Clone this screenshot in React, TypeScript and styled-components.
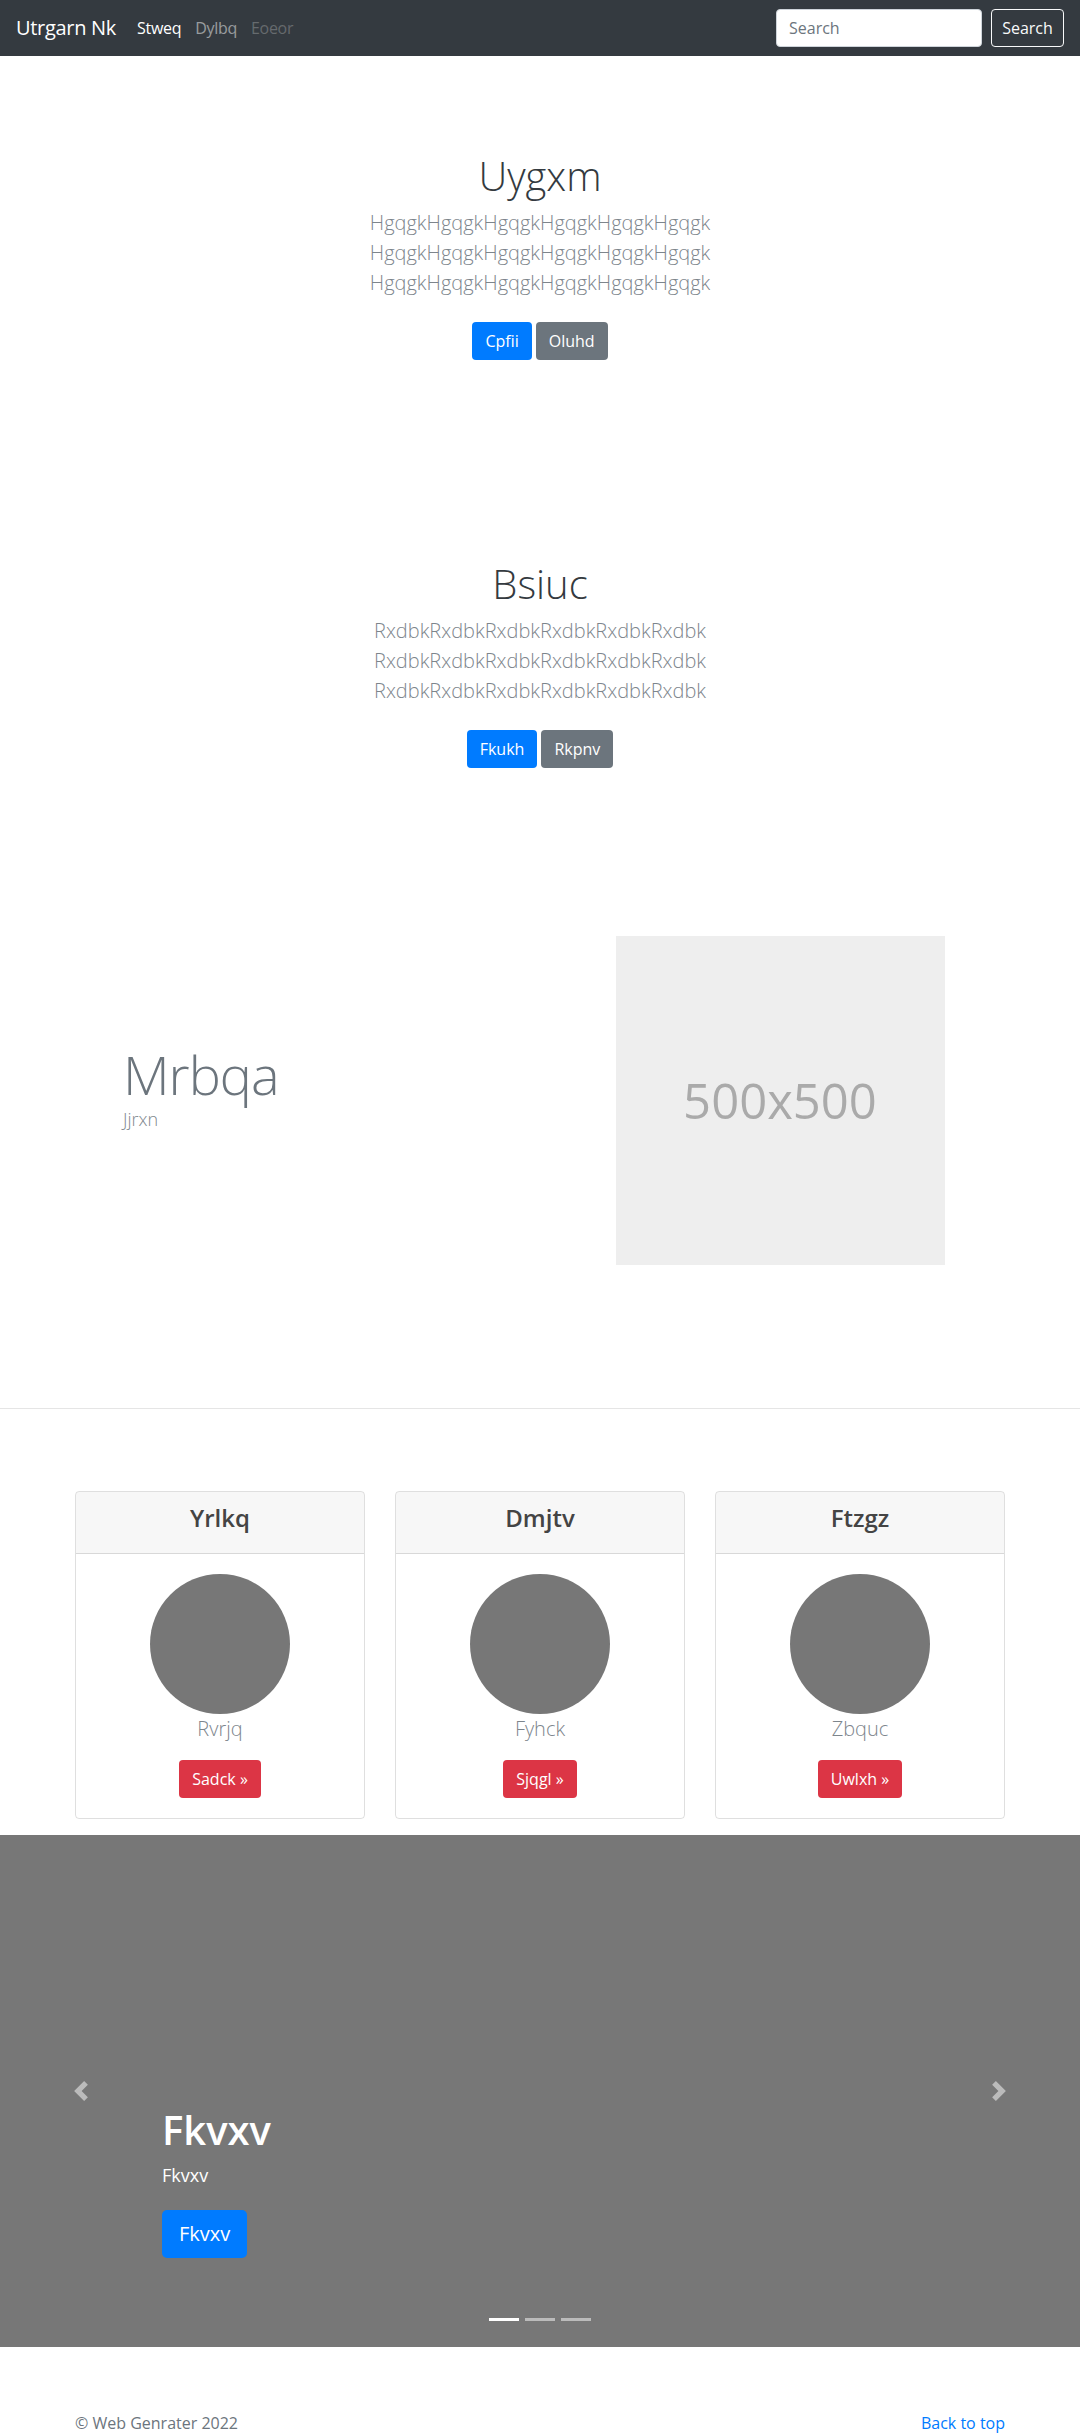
import React from 'react';
import styled, { createGlobalStyle } from 'styled-components';

const GlobalStyle = createGlobalStyle`
  * { box-sizing: border-box; }
  body {
    margin: 0;
    font-family: "Segoe UI", "Open Sans", "Noto Sans", sans-serif;
    font-size: 16px;
    line-height: 1.5;
    color: #212529;
    background: #fff;
  }
`;

const NavBar = styled.nav`
  height: 56px;
  background: #343a40;
  display: flex;
  align-items: center;
  padding: 0 16px;
`;

const Brand = styled.a`
  font-size: 20px;
  line-height: 30px;
  color: #fff;
  margin-right: 14px;
  text-decoration: none;
  letter-spacing: -0.3px;
`;

const NavList = styled.div`
  display: flex;
  align-items: center;
`;

const NavLink = styled.a<{ $state: 'active' | 'idle' | 'disabled' }>`
  padding: 8px 7px;
  font-size: 16px;
  text-decoration: none;
  letter-spacing: -0.3px;
  color: ${p =>
    p.$state === 'active' ? '#fff' : p.$state === 'idle' ? 'rgba(255,255,255,.5)' : 'rgba(255,255,255,.25)'};
`;

const SearchForm = styled.form`
  margin-left: auto;
  display: flex;
  align-items: center;
  gap: 9px;
`;

const SearchInput = styled.input`
  width: 206px;
  height: 38px;
  padding: 6px 12px;
  font-size: 16px;
  font-family: inherit;
  border: 1px solid #ced4da;
  border-radius: 4px;
  color: #495057;
  &::placeholder { color: #6c757d; }
`;

const OutlineButton = styled.button`
  height: 38px;
  width: 73px;
  padding: 0;
  font-size: 16px;
  font-family: inherit;
  color: #f8f9fa;
  background: transparent;
  border: 1px solid #f8f9fa;
  border-radius: 4px;
`;

const Hero = styled.section`
  padding: 96px 0;
  text-align: center;
`;

const HeroTitle = styled.h1`
  margin: 0 0 8px;
  font-size: 40px;
  font-weight: 300;
  line-height: 1.2;
  color: #343a40;
`;

const Lead = styled.p`
  margin: 0 0 16px;
  font-size: 20px;
  font-weight: 300;
  line-height: 30px;
  color: #7d858c;
`;

const LeadLine = styled.span`
  display: block;
`;

const ButtonRow = styled.div`
  margin: 24px 0 8px;
  display: flex;
  justify-content: center;
  gap: 4px;
`;

const Btn = styled.a<{ $tone: 'primary' | 'secondary' | 'danger'; $large?: boolean }>`
  display: inline-block;
  padding: ${p => (p.$large ? '8px 16px' : '6px 12px')};
  font-size: ${p => (p.$large ? '20px' : '16px')};
  line-height: 1.5;
  border-radius: ${p => (p.$large ? '5px' : '4px')};
  border: 1px solid transparent;
  color: #fff;
  text-decoration: none;
  background: ${p => (p.$tone === 'primary' ? '#007bff' : p.$tone === 'secondary' ? '#6c757d' : '#dc3545')};
`;

const Container = styled.div`
  width: 930px;
  margin: 0 auto;
`;

const Feature = styled.section`
  padding: 64px 0 143px;
`;

const FeatureRow = styled.div`
  display: grid;
  grid-template-columns: 1fr 1fr;
  column-gap: 30px;
  align-items: center;
`;

const FeatureText = styled.div`
  padding-left: 48px;
  padding-bottom: 26px;
`;

const FeatureTitle = styled.h2`
  margin: 0;
  font-size: 54px;
  font-weight: 300;
  line-height: 1.2;
  letter-spacing: -1px;
  color: #6c757d;
`;

const FeatureSub = styled.p`
  margin: 0;
  font-size: 18px;
  font-weight: 300;
  color: #80878d;
`;

const Placeholder = styled.div`
  width: 329px;
  height: 329px;
  justify-self: center;
  background: #eee;
  color: #aaa;
  font-size: 49px;
  display: flex;
  align-items: center;
  justify-content: center;
`;

const Divider = styled.hr`
  margin: 0;
  border: 0;
  border-top: 1px solid rgba(0, 0, 0, 0.1);
`;

const Cards = styled.section`
  padding: 82px 0 16px;
`;

const CardGrid = styled.div`
  display: grid;
  grid-template-columns: repeat(3, 1fr);
  gap: 30px;
`;

const Card = styled.div`
  border: 1px solid rgba(0, 0, 0, 0.125);
  border-radius: 4px;
  overflow: hidden;
  text-align: center;
`;

const CardHeader = styled.div`
  padding: 12px 20px;
  background: rgba(0, 0, 0, 0.03);
  border-bottom: 1px solid rgba(0, 0, 0, 0.125);
`;

const CardTitle = styled.h4`
  margin: 0 0 8px;
  font-size: 24px;
  font-weight: 600;
  line-height: 1.2;
  color: #444;
`;

const CardBody = styled.div`
  padding: 20px;
`;

const Avatar = styled.div`
  width: 140px;
  height: 140px;
  border-radius: 50%;
  background: #777;
  margin: 0 auto;
`;

const CardName = styled.p`
  margin: 0 0 16px;
  font-size: 20px;
  font-weight: 300;
  line-height: 30px;
  color: #7d858c;
`;

const Carousel = styled.section`
  position: relative;
  height: 512px;
  background: #777;
  margin-bottom: 64px;
`;

const Control = styled.a<{ $side: 'left' | 'right' }>`
  position: absolute;
  top: 0;
  bottom: 0;
  ${p => p.$side}: 0;
  width: 15%;
  display: flex;
  align-items: center;
  justify-content: center;
  opacity: 0.5;
`;

const Caption = styled.div`
  position: absolute;
  left: 15%;
  right: 15%;
  bottom: 53px;
  padding: 20px 0;
  color: #fff;
  display: flex;
  flex-direction: column;
  align-items: flex-start;
`;

const CaptionTitle = styled.h1`
  margin: 0 0 8px;
  font-size: 40px;
  font-weight: 600;
  line-height: 1.2;
`;

const CaptionText = styled.p`
  margin: 0 0 21px;
  font-size: 18px;
`;

const CaptionAction = styled.div`
  margin-bottom: 16px;
`;

const Indicators = styled.ol`
  position: absolute;
  left: 0;
  right: 0;
  bottom: 26px;
  margin: 0;
  padding: 0;
  list-style: none;
  display: flex;
  justify-content: center;
  gap: 6px;
`;

const Indicator = styled.li<{ $active?: boolean }>`
  width: 30px;
  height: 3px;
  background: #fff;
  opacity: ${p => (p.$active ? 1 : 0.5)};
`;

const Footer = styled.footer`
  display: flex;
  justify-content: space-between;
  align-items: baseline;
  color: #6c757d;
`;

const FooterText = styled.p`
  margin: 0 0 16px;
`;

const FooterLink = styled.a`
  color: #007bff;
  text-decoration: none;
`;

const heroes = [
  { title: 'Uygxm', word: 'Hgqgk', primary: 'Cpfii', secondary: 'Oluhd' },
  { title: 'Bsiuc', word: 'Rxdbk', primary: 'Fkukh', secondary: 'Rkpnv' },
];

const cards = [
  { title: 'Yrlkq', name: 'Rvrjq', action: 'Sadck' },
  { title: 'Dmjtv', name: 'Fyhck', action: 'Sjqgl' },
  { title: 'Ftzgz', name: 'Zbquc', action: 'Uwlxh' },
];

const Chevron = ({ dir }: { dir: 'prev' | 'next' }) => (
  <svg width="20" height="20" viewBox="0 0 8 8" fill="#fff">
    <path
      d={dir === 'prev' ? 'M5.25 0l-4 4 4 4 1.5-1.5L4.25 4l2.5-2.5L5.25 0z' : 'M2.75 0l-1.5 1.5L3.75 4l-2.5 2.5L2.75 8l4-4-4-4z'}
    />
  </svg>
);

export default function App() {
  return (
    <>
      <GlobalStyle />
      <NavBar>
        <Brand href="#">Utrgarn Nk</Brand>
        <NavList>
          <NavLink $state="active" href="#">Stweq</NavLink>
          <NavLink $state="idle" href="#">Dylbq</NavLink>
          <NavLink $state="disabled" href="#">Eoeor</NavLink>
        </NavList>
        <SearchForm onSubmit={e => e.preventDefault()}>
          <SearchInput placeholder="Search" />
          <OutlineButton type="submit">Search</OutlineButton>
        </SearchForm>
      </NavBar>

      {heroes.map(h => (
        <Hero key={h.title}>
          <HeroTitle>{h.title}</HeroTitle>
          <Lead>
            {[0, 1, 2].map(i => (
              <LeadLine key={i}>{h.word.repeat(6)}</LeadLine>
            ))}
          </Lead>
          <ButtonRow>
            <Btn $tone="primary" href="#">{h.primary}</Btn>
            <Btn $tone="secondary" href="#">{h.secondary}</Btn>
          </ButtonRow>
        </Hero>
      ))}

      <Feature>
        <Container>
          <FeatureRow>
            <FeatureText>
              <FeatureTitle>Mrbqa</FeatureTitle>
              <FeatureSub>Jjrxn</FeatureSub>
            </FeatureText>
            <Placeholder>500x500</Placeholder>
          </FeatureRow>
        </Container>
      </Feature>

      <Divider />

      <Cards>
        <Container>
          <CardGrid>
            {cards.map(c => (
              <Card key={c.title}>
                <CardHeader>
                  <CardTitle>{c.title}</CardTitle>
                </CardHeader>
                <CardBody>
                  <Avatar />
                  <CardName>{c.name}</CardName>
                  <Btn $tone="danger" href="#">{c.action} »</Btn>
                </CardBody>
              </Card>
            ))}
          </CardGrid>
        </Container>
      </Cards>

      <Carousel>
        <Control $side="left" href="#"><Chevron dir="prev" /></Control>
        <Control $side="right" href="#"><Chevron dir="next" /></Control>
        <Caption>
          <CaptionTitle>Fkvxv</CaptionTitle>
          <CaptionText>Fkvxv</CaptionText>
          <CaptionAction>
            <Btn $tone="primary" $large href="#">Fkvxv</Btn>
          </CaptionAction>
        </Caption>
        <Indicators>
          <Indicator $active />
          <Indicator />
          <Indicator />
        </Indicators>
      </Carousel>

      <Container>
        <Footer>
          <FooterText>© Web Genrater 2022</FooterText>
          <FooterText><FooterLink href="#">Back to top</FooterLink></FooterText>
        </Footer>
      </Container>
    </>
  );
}
